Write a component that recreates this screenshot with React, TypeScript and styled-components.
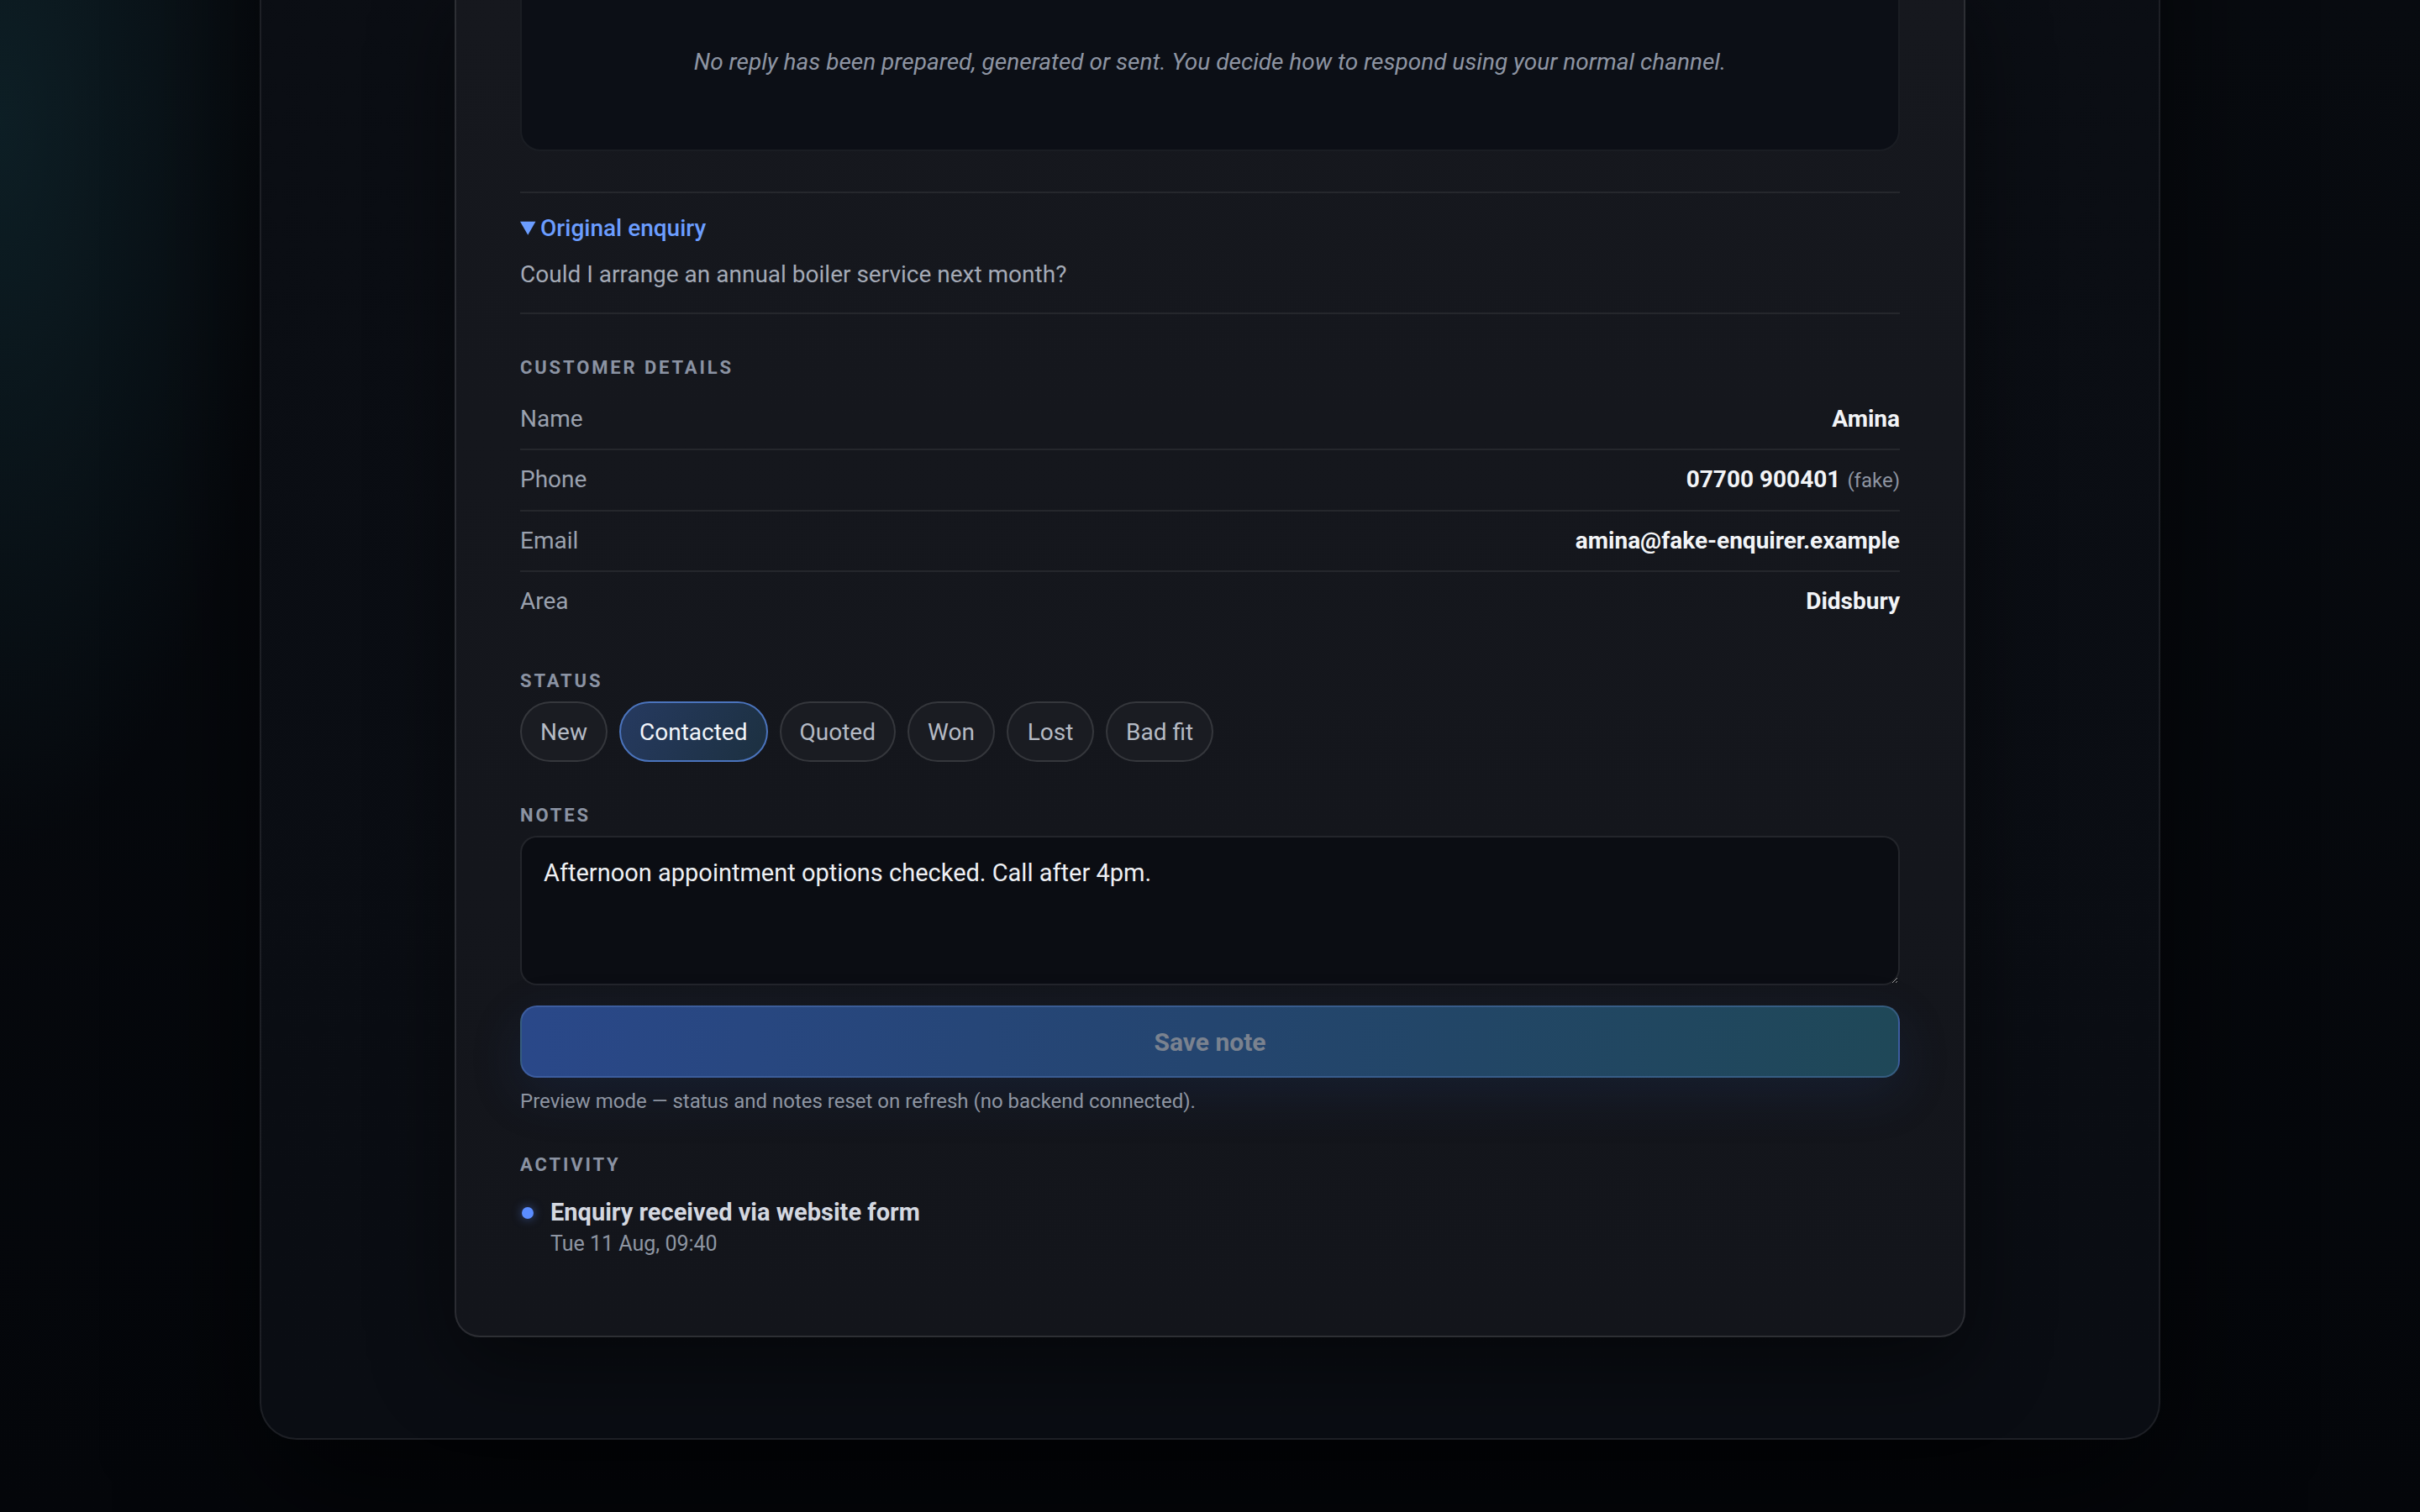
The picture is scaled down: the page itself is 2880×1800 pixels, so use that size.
import React from 'react'
import styled, { createGlobalStyle } from 'styled-components'

const GlobalStyle = createGlobalStyle`
  html {
    zoom: 2;
    background: #05070b;
  }
  body {
    margin: 0;
    font-family: Roboto, Inter, "Noto Sans", "Liberation Sans", sans-serif;
    color: #e8ebf0;
    -webkit-font-smoothing: antialiased;
  }
  * { box-sizing: border-box; }
`

const customer = [
  { label: 'Name', value: 'Amina' },
  { label: 'Phone', value: '07700 900401', hint: '(fake)' },
  { label: 'Email', value: 'amina@fake-enquirer.example' },
  { label: 'Area', value: 'Didsbury' },
]

const statuses = ['New', 'Contacted', 'Quoted', 'Won', 'Lost', 'Bad fit']

const App: React.FC = () => {
  return (
    <>
      <GlobalStyle />
      <Page>
        <Shell>
          <Card>
            <ReplyBox>
              No reply has been prepared, generated or sent. You decide how to respond using your normal channel.
            </ReplyBox>

            <Enquiry open>
              <summary>Original enquiry</summary>
              <p>Could I arrange an annual boiler service next month?</p>
            </Enquiry>

            <SectionTitle>Customer details</SectionTitle>
            <DetailList>
              {customer.map(row => (
                <DetailRow key={row.label}>
                  <dt>{row.label}</dt>
                  <dd>
                    {row.value}
                    {row.hint && <Hint>{row.hint}</Hint>}
                  </dd>
                </DetailRow>
              ))}
            </DetailList>

            <SectionTitle $space={23}>Status</SectionTitle>
            <Pills>
              {statuses.map(s => (
                <Pill key={s} $active={s === 'Contacted'}>{s}</Pill>
              ))}
            </Pills>

            <SectionTitle $space={25}>Notes</SectionTitle>
            <Notes defaultValue="Afternoon appointment options checked. Call after 4pm." />
            <SaveButton disabled>Save note</SaveButton>
            <Preview>Preview mode — status and notes reset on refresh (no backend connected).</Preview>

            <SectionTitle $space={23}>Activity</SectionTitle>
            <ActivityItem>
              <Dot />
              <div>
                <ActivityTitle>Enquiry received via website form</ActivityTitle>
                <ActivityTime>Tue 11 Aug, 09:40</ActivityTime>
              </div>
            </ActivityItem>
          </Card>
        </Shell>
      </Page>
    </>
  )
}

const Page = styled.div`
  min-height: 900px;
  overflow: hidden;
  display: flex;
  justify-content: center;
  padding-bottom: 43px;
  background:
    radial-gradient(ellipse 240px 620px at 0% 8%, rgba(18, 50, 58, 0.5), transparent 70%),
    linear-gradient(180deg, #080b10 0%, #04060a 100%);
`

const Shell = styled.div`
  width: 1131px;
  margin-top: -120px;
  padding: 104px 115px 60px;
  border: 1px solid rgba(255, 255, 255, 0.08);
  border-radius: 22px;
  background: linear-gradient(180deg, #0b0e14 0%, #0a0d13 100%);
  box-shadow: 0 30px 80px rgba(0, 0, 0, 0.6);
  display: flex;
  justify-content: center;
`

const Card = styled.section`
  width: 900px;
  padding: 0 38px 42px;
  border: 1px solid rgba(255, 255, 255, 0.1);
  border-radius: 15px;
  background: linear-gradient(180deg, #16181e 0%, #13151b 100%);
  box-shadow: 0 18px 50px rgba(0, 0, 0, 0.45);
`

const ReplyBox = styled.div`
  padding: 40px 24px 42px;
  border: 1px solid rgba(255, 255, 255, 0.06);
  border-radius: 12px;
  background: #0c0f16;
  color: #8e95a3;
  font-size: 14px;
  font-style: italic;
  line-height: 20px;
  text-align: center;
`

const Enquiry = styled.details`
  margin-top: 24px;
  padding: 11px 0 12px;
  border-top: 1px solid rgba(255, 255, 255, 0.07);
  border-bottom: 1px solid rgba(255, 255, 255, 0.07);

  summary {
    color: #6b9dff;
    font-size: 14px;
    font-weight: 500;
    line-height: 20px;
    cursor: pointer;
  }

  p {
    margin: 7px 0 0;
    color: #a4aab6;
    font-size: 14px;
    line-height: 21px;
  }
`

const SectionTitle = styled.h4<{ $space?: number }>`
  margin: ${p => p.$space ?? 25}px 0 0;
  color: #8b93a3;
  font-size: 11px;
  font-weight: 700;
  letter-spacing: 0.13em;
  line-height: 14px;
  text-transform: uppercase;
`

const DetailList = styled.dl`
  margin: 6px 0 0;
`

const DetailRow = styled.div`
  display: flex;
  justify-content: space-between;
  align-items: baseline;
  padding: 8px 0;
  line-height: 19px;
  border-bottom: 1px solid rgba(255, 255, 255, 0.07);

  &:last-child { border-bottom: none; }

  dt {
    color: #9aa1ae;
    font-size: 14px;
  }

  dd {
    margin: 0;
    color: #f2f4f7;
    font-size: 14px;
    font-weight: 700;
  }
`

const Hint = styled.span`
  margin-left: 4px;
  color: #8d94a1;
  font-size: 12px;
  font-weight: 400;
`

const Pills = styled.div`
  display: flex;
  gap: 7px;
  margin-top: 5px;
`

const Pill = styled.button<{ $active?: boolean }>`
  min-width: 52px;
  height: 36px;
  padding: 0 11px;
  border-radius: 999px;
  border: 1px solid ${p => (p.$active ? '#4b74bd' : 'rgba(255, 255, 255, 0.12)')};
  background: ${p => (p.$active
    ? 'linear-gradient(120deg, #263a60 0%, #1c3040 100%)'
    : '#1a1c22')};
  color: ${p => (p.$active ? '#f1f4f9' : '#b5bac4')};
  font-family: inherit;
  font-size: 14px;
  cursor: pointer;
`

const Notes = styled.textarea`
  display: block;
  width: 100%;
  height: 89px;
  margin-top: 5px;
  padding: 11px 13px;
  border: 1px solid rgba(255, 255, 255, 0.1);
  border-radius: 10px;
  background: #0b0d13;
  color: #eef0f4;
  color-scheme: dark;
  font-family: inherit;
  font-size: 14.5px;
  line-height: 20px;
  outline: none;
`

const SaveButton = styled.button`
  display: block;
  width: 100%;
  height: 43px;
  margin-top: 12px;
  border: 1px solid rgba(96, 134, 204, 0.35);
  border-radius: 10px;
  background: linear-gradient(90deg, #2a4889 0%, #24456f 50%, #1f4858 100%);
  box-shadow: 0 10px 30px rgba(38, 72, 140, 0.18);
  color: #7a828f;
  font-family: inherit;
  font-size: 15px;
  font-weight: 700;
`

const Preview = styled.p`
  margin: 6px 0 0;
  color: #8e95a2;
  font-size: 12px;
  line-height: 16px;
`

const ActivityItem = styled.div`
  display: flex;
  align-items: flex-start;
  gap: 10px;
  margin-top: 11px;
`

const Dot = styled.span`
  flex: none;
  width: 7px;
  height: 7px;
  margin: 7px 0 0 1px;
  border-radius: 50%;
  background: #5b8dff;
  box-shadow: 0 0 6px rgba(91, 141, 255, 0.5);
`

const ActivityTitle = styled.div`
  color: #d4d8e0;
  font-size: 14.5px;
  font-weight: 700;
  line-height: 20px;
`

const ActivityTime = styled.div`
  margin-top: 1px;
  color: #8e95a2;
  font-size: 12.5px;
  line-height: 16px;
`

export default App
